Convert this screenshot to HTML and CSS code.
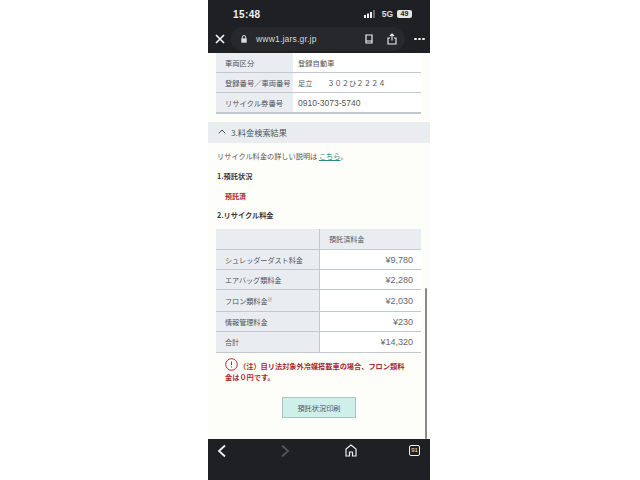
FILE: index.html
```html
<!DOCTYPE html>
<html lang="ja">
<head>
<meta charset="utf-8">
<title>www1.jars.gr.jp</title>
<link rel="stylesheet" href="styles.css">
</head>
<body>
<div class="phone">
  <header class="top">
    <div class="status">
      <span class="time">15:48</span>
      <div class="status-right">
        <svg class="signal" width="14" height="8" viewBox="0 0 14 8"><rect x="0" y="5" width="2" height="3" fill="#eee"/><rect x="3" y="3.500" width="2" height="4.500" fill="#eee"/><rect x="6" y="2" width="2" height="6" fill="#eee"/><rect x="9" y="0" width="2" height="8" fill="#666"/></svg>
        <span class="net">5G</span>
        <span class="batt">49</span>
      </div>
    </div>
    <div class="toolbar">
      <svg class="close" width="10" height="10" viewBox="0 0 10 10"><path d="M1 1l8 8M9 1l-8 8" stroke="#f2f2f2" stroke-width="1.700" fill="none"/></svg>
      <div class="pill">
        <svg class="lock" width="6" height="8" viewBox="0 0 6 8"><path d="M1.300 3.500V2.200a1.700 1.700 0 0 1 3.400 0v1.300" stroke="#ddd" fill="none"/><rect x="0.300" y="3.300" width="5.400" height="4.400" fill="#ddd"/></svg>
        <span class="url">www1.jars.gr.jp</span>
        <svg class="book" width="8" height="10" viewBox="0 0 8 10"><path d="M1 1h6v8H1zM1 7h6" stroke="#eee" stroke-width="1.200" fill="none"/></svg>
        <svg class="share" width="10" height="12" viewBox="0 0 10 12"><path d="M5 7.500V1M3 3l2-2 2 2M3 5H1v6h8V5H7" stroke="#eee" stroke-width="1.100" fill="none"/></svg>
      </div>
      <span class="dots"><i></i><i></i><i></i></span>
    </div>
  </header>
  <main class="content">
    <table class="info">
      <tr><th>車両区分</th><td>登録自動車</td></tr>
      <tr><th>登録番号／車両番号</th><td>足立　　３０２ひ２２２４</td></tr>
      <tr><th>リサイクル券番号</th><td class="code">0910-3073-5740</td></tr>
    </table>
    <div class="section">
      <svg width="8" height="5" viewBox="0 0 8 5"><path d="M.7 4.300L4 1l3.300 3.300" stroke="#456" stroke-width="1" fill="none"/></svg>
      <span>3.料金検索結果</span>
    </div>
    <p class="lead">リサイクル料金の詳しい説明は <a class="link">こちら</a>。</p>
    <h2 class="h-one">1.預託状況</h2>
    <p class="status-red">預託済</p>
    <h2 class="h-two">2.リサイクル料金</h2>
    <table class="fees">
      <tr class="head"><th></th><td>預託済料金</td></tr>
      <tr><th>シュレッダーダスト料金</th><td class="num">¥9,780</td></tr>
      <tr><th>エアバッグ類料金</th><td class="num">¥2,280</td></tr>
      <tr class="tall"><th>フロン類料金<sup>※</sup></th><td class="num">¥2,030</td></tr>
      <tr><th>情報管理料金</th><td class="num">¥230</td></tr>
      <tr class="last"><th>合計</th><td class="num">¥14,320</td></tr>
    </table>
    <div class="note">
      <svg class="warn" width="13" height="13" viewBox="0 0 13 13"><circle cx="6.500" cy="6.500" r="5.800" stroke="#a82a32" fill="none"/><path d="M6.500 3.500v3.500M6.500 8.500v1" stroke="#a82a32" fill="none"/></svg>
      （注）自リ法対象外冷媒搭載車の場合、フロン類料<br>金は０円です。
    </div>
    <div class="btn-row"><button class="btn">預託状況印刷</button></div>
    <div class="scrollbar"></div>
  </main>
  <footer class="bottom">
    <svg width="10" height="14" viewBox="0 0 10 14"><path d="M8 1.500L2 7l6 5.500" stroke="#f0f0f0" stroke-width="1.800" fill="none"/></svg>
    <svg width="10" height="14" viewBox="0 0 10 14"><path d="M2 1.500L8 7l-6 5.500" stroke="#555" stroke-width="1.800" fill="none"/></svg>
    <svg class="home" width="12" height="13" viewBox="0 0 12 13"><path d="M1 12V5l5-4 5 4v7H7.500V8h-3v4z" stroke="#eee" stroke-width="1.200" fill="none"/></svg>
    <span class="tabs">91</span>
  </footer>
</div>
</body>
</html>
```

FILE: styles.css
```css
* { box-sizing: border-box; }
html, body { margin: 0; height: 100%; background: #fff; overflow: hidden; }
body { font-family: "Noto Sans CJK JP", "Noto Sans", sans-serif; }
.phone { width: 222px; height: 480px; margin-left: 208px; display: flex; flex-direction: column; background: #fdfdf9; }
.top { height: 53px; background: #1f2023; color: #eee; flex: none; }
.status { height: 26px; display: flex; justify-content: space-between; align-items: center; padding: 2px 18px 0 25px; }
.time { font: 700 10px "Liberation Sans", sans-serif; letter-spacing: .4px; color: #f2f2f2; }
.status-right { display: flex; align-items: center; gap: 4px; }
.net { font: 700 8.500px "Liberation Sans", sans-serif; color: #ddd; }
.batt { background: #e6e6e6; color: #222; font: 700 7px/8px "Liberation Sans", sans-serif; width: 15px; height: 8px; border-radius: 2px; text-align: center; }
.toolbar { height: 26px; display: flex; align-items: center; padding-left: 7px; }
.pill { width: 174px; height: 24px; margin-left: 6px; border-radius: 12px; background: #27282c; display: flex; align-items: center; padding-left: 10px; }
.url { font: 8.500px "Liberation Sans", sans-serif; color: #d8d8d8; margin-left: 9px; width: 92px; letter-spacing: .2px; }
.book { margin-left: 17px; }
.share { margin-left: 14px; }
.dots { display: flex; gap: 1.500px; margin-left: 9px; }
.dots i { width: 2.500px; height: 2.500px; border-radius: 50%; background: #eee; }
.content { flex: 1; position: relative; padding: 0 9px 0 8px; overflow: hidden; font-size: 7.200px; color: #555; }
table { border-collapse: separate; border-spacing: 0; width: 205px; table-layout: fixed; font-size: 7.300px; }
th { font-weight: 400; text-align: left; background: #e9ecf0; padding: 0 0 0 9px; width: 77px; color: #4d5560; white-space: nowrap; border-bottom: 1px solid #c3c8cd; }
td { padding: 0 0 0 5px; background: #fff; color: #555; white-space: nowrap; border-bottom: 1px solid #c3c8cd; }
.info tr { height: 20px; }
.info tr:last-child { height: 21px; }
.info tr:last-child th, .info tr:last-child td { border-bottom-width: 2px; }
.info td.code { font: 8.500px "Liberation Sans", sans-serif; }
.section { margin: 8px -9px 0 -8px; height: 21px; background: #e9edf0; display: flex; align-items: center; gap: 5px; padding: 0 0 2px 10px; font-size: 8.200px; color: #4d5560; }
.lead { margin: 7px 0 0 1px; line-height: 12px; }
.link { color: #2e8a78; text-decoration: underline; }
h2 { font-size: 7.200px; margin: 0 0 0 1px; line-height: 12px; font-weight: 700; color: #3a3a3a; }
.h-one { margin-top: 8px; }
.status-red { margin: 8px 0 0 9px; line-height: 12px; font-weight: 700; font-size: 7px; color: #a82a32; }
.h-two { margin-top: 7px; }
.fees { margin-top: 8px; font-size: 7.100px; }
.fees th { width: 104px; border-right: 1px solid #c3c8cd; }
.fees tr { height: 20px; }
.fees tr.tall { height: 22px; }
.fees tr.head, .fees tr.last { height: 21px; }
.fees tr.head td, .fees tr.head th { background: #e9ecf0; }
.fees tr.head td { padding-left: 9px; }
.fees td.num { text-align: right; padding-right: 8px; font: 9px "Liberation Sans", sans-serif; color: #666; }
.fees sup { color: #d0454c; font-size: 5px; line-height: 0; vertical-align: 3px; }
.note { margin: 8px 0 0 9px; color: #a82a32; font-weight: 700; font-size: 7.200px; line-height: 11px; position: relative; white-space: nowrap; text-indent: 14px; }
.warn { position: absolute; left: 0; top: -3px; }
.btn-row { display: flex; justify-content: center; margin-top: 14px; padding-left: 1px; }
.btn { width: 74px; height: 21px; background: #cff0ea; border: 1px solid #a8c6c2; padding: 0; font: 7.200px "Noto Sans CJK JP", sans-serif; color: #556; }
.scrollbar { position: absolute; right: 3px; top: 235px; width: 2px; height: 151px; background: #8a8a8a; border-radius: 1px; }
.bottom { height: 41px; flex: none; background: #1f2023; display: flex; justify-content: space-between; align-items: flex-start; padding: 5px 10px 0 9px; }
.home { position: relative; left: 1px; }
.tabs { width: 11px; height: 11px; border: 1px solid #eee; border-radius: 2px; font: 6px/9px "Liberation Sans", sans-serif; text-align: center; color: #eee; margin-top: 1px; }
```
